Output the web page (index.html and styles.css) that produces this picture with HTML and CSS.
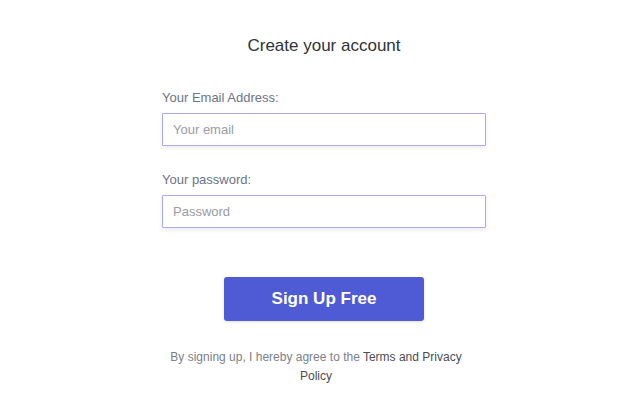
FILE: index.html
```html
<!DOCTYPE html>
<html>
<head>
<meta charset="utf-8">
<link rel="stylesheet" href="styles.css">
</head>
<body>
<main class="page">
  <h1 class="title">Create your account</h1>
  <form class="form">
    <div class="field">
      <label class="label">Your Email Address:</label>
      <div class="input"><span class="placeholder">Your email</span></div>
    </div>
    <div class="field">
      <label class="label">Your password:</label>
      <div class="input"><span class="placeholder">Password</span></div>
    </div>
    <div class="actions">
      <button type="button" class="btn">Sign Up Free</button>
    </div>
    <p class="terms">By signing up, I hereby agree to the <span class="link">Terms and Privacy Policy</span></p>
  </form>
</main>
</body>
</html>
```
FILE: styles.css
```css
html, body {
  margin: 0;
  padding: 0;
  background: #ffffff;
}
body {
  font-family: "Liberation Sans", Arial, sans-serif;
  width: 628px;
  height: 415px;
  overflow: hidden;
}
.page {
  display: flex;
  flex-direction: column;
  align-items: center;
  padding-top: 36px;
  padding-left: 20px;
}
.title {
  margin: 0;
  font-size: 17px;
  font-weight: 400;
  color: #2f3238;
  line-height: 20px;
}
.form {
  width: 324px;
  display: flex;
  flex-direction: column;
  margin-top: 34px;
}
.field {
  display: flex;
  flex-direction: column;
  margin-bottom: 26px;
}
.label {
  font-size: 13px;
  color: #6a7389;
  line-height: 16px;
  margin-bottom: 7px;
}
.input {
  box-sizing: border-box;
  height: 33px;
  border: 1.5px solid #a9abf0;
  border-radius: 1px;
  box-shadow: 0 2px 4px rgba(0, 0, 0, 0.08);
  display: flex;
  align-items: center;
  padding-left: 10px;
}
.placeholder {
  font-size: 13px;
  color: #9a9ca3;
}
.actions {
  display: flex;
  justify-content: center;
  margin-top: 23px;
}
.btn {
  width: 200px;
  height: 44px;
  border: none;
  border-radius: 3px;
  background: #4f5bd5;
  color: #ffffff;
  font-family: "Liberation Sans", Arial, sans-serif;
  font-weight: 700;
  font-size: 17px;
  box-shadow: 0 1px 3px rgba(0, 0, 0, 0.12);
}
.terms {
  margin: 27px 0 0;
  font-size: 12px;
  line-height: 19px;
  color: #7b7f88;
  text-align: center;
  padding: 0 22px 0 6px;
}
.link {
  color: #4a4d55;
}
```
